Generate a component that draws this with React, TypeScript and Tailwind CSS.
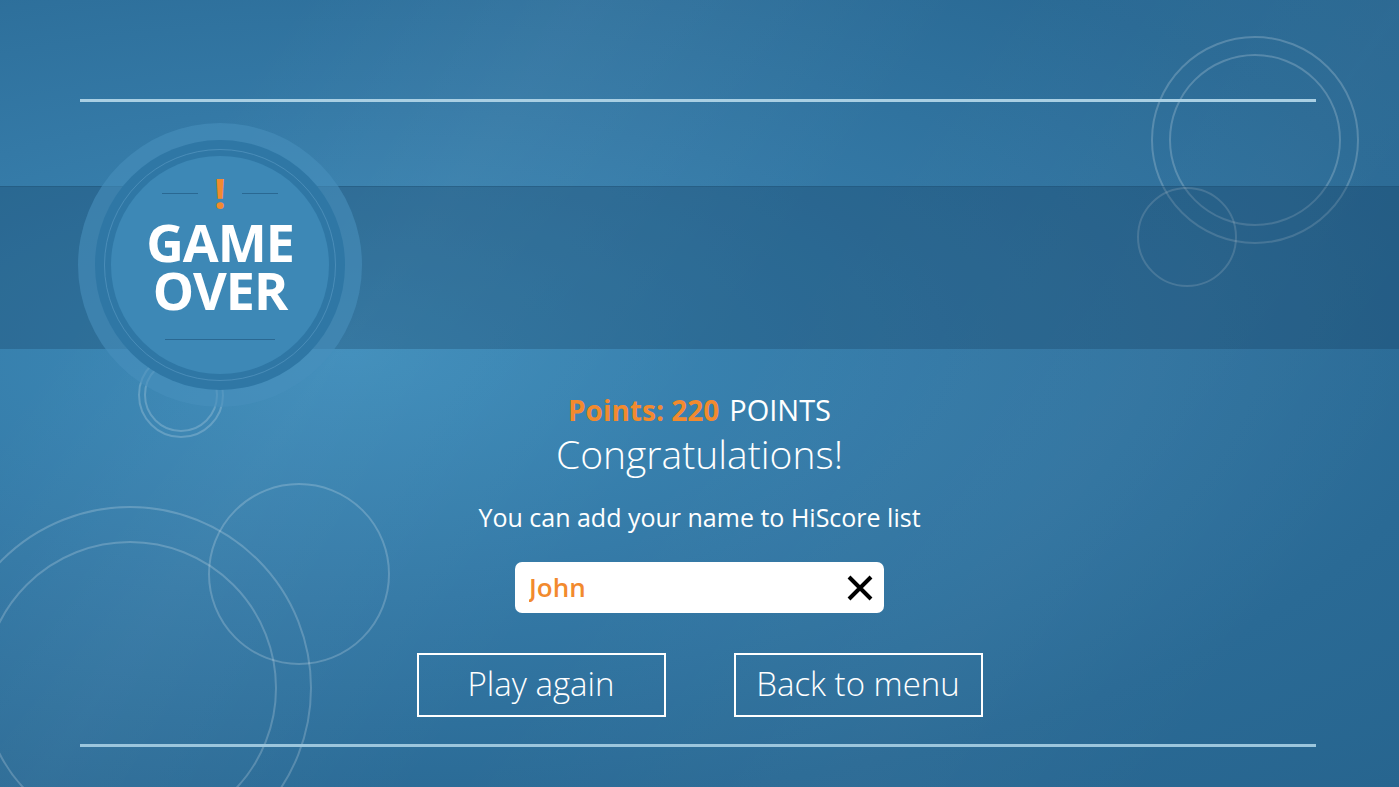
import { useState } from "react";

const font = { fontFamily: '"Open Sans", "Noto Sans", sans-serif' };

function Ring({ className }: { className: string }) {
  return <div className={`absolute rounded-full border-2 border-white/20 ${className}`} />;
}

function GameOverBadge() {
  return (
    <div className="absolute left-[78px] top-[123px] w-[284px] h-[284px] rounded-full bg-[#4790bd]/60 flex items-center justify-center">
      <div className="w-[250px] h-[250px] rounded-full bg-[#2f77a5] flex items-center justify-center">
        <div className="w-[232px] h-[232px] rounded-full border border-[#5c9bc4]/60 flex items-center justify-center">
          <div className="w-[218px] h-[218px] rounded-full bg-[#3d88b6] flex flex-col items-center">
            {/* exclamation with side rules */}
            <div className="mt-[20px] flex items-center gap-[16px]">
              <div className="w-[36px] h-px bg-[#2a6892]" />
              <span className="text-[#f28a2e] font-bold text-[42px] leading-[34px]">!</span>
              <div className="w-[36px] h-px bg-[#2a6892]" />
            </div>
            <div className="mt-[8px] text-white font-bold text-[52px] leading-[48px] tracking-[-1px] text-center">
              GAME
              <br />
              OVER
            </div>
            <div className="mt-[25px] w-[110px] h-px bg-[#2a6892]" />
          </div>
        </div>
      </div>
    </div>
  );
}

export default function App() {
  const [name, setName] = useState("John");

  return (
    <div
      className="relative w-full h-[787px] overflow-hidden bg-[radial-gradient(ellipse_at_25%_45%,#3d8cba_0%,#3479a6_40%,#2a6a95_75%,#27658f_100%)]"
      style={font}
    >
      {/* soft diagonal sheen */}
      <div className="absolute inset-0 bg-[linear-gradient(125deg,transparent_15%,rgba(255,255,255,0.04)_30%,transparent_50%,rgba(255,255,255,0.025)_72%,transparent_88%)]" />

      {/* decorative rings */}
      <Ring className="left-[1151px] top-[36px] w-[208px] h-[208px]" />
      <Ring className="left-[1169px] top-[54px] w-[172px] h-[172px]" />
      <Ring className="left-[1137px] top-[187px] w-[100px] h-[100px]" />
      <Ring className="left-[-52px] top-[506px] w-[364px] h-[364px]" />
      <Ring className="left-[-17px] top-[541px] w-[294px] h-[294px]" />
      <Ring className="left-[208px] top-[483px] w-[182px] h-[182px]" />

      <div className="relative flex flex-col">
        <div className="mt-[99px] mx-[80px] w-[1236px] h-[3px] bg-[#a9cfe3]" />

        {/* dark band */}
        <div className="mt-[84px] h-[163px] bg-[#0a2f4f]/25 border-t border-[#1d4f74]/40" />

        <div className="flex flex-col items-center text-white">
          <div className="mt-[44px] text-[28px] leading-[34px]">
            <span className="text-[#f28a2e] font-bold">Points: 220</span>
            <span className="ml-[10px] text-[29px]">POINTS</span>
          </div>
          <div className="mt-[4px] text-[39px] leading-[46px] font-light">Congratulations!</div>
          <div className="mt-[24px] text-[25px] leading-[32px]">You can add your name to HiScore list</div>

          <div className="mt-[29px] w-[369px] h-[51px] bg-white rounded-[7px] flex items-center pl-[14px] pr-[10px]">
            <input
              value={name}
              onChange={(e) => setName(e.target.value)}
              className="flex-1 min-w-0 bg-transparent outline-none text-[#f28a2e] font-semibold text-[26px]"
              style={font}
            />
            <button onClick={() => setName("")} className="w-[28px] h-[28px] flex items-center justify-center">
              <svg width="26" height="26" viewBox="0 0 26 26">
                <path d="M2 2 24 24M24 2 2 24" stroke="#000" strokeWidth="4" />
              </svg>
            </button>
          </div>

          <div className="mt-[40px] flex gap-[68px]">
            <button className="w-[249px] h-[64px] border-2 border-white text-[33px] font-light text-white pb-[2px]">
              Play again
            </button>
            <button className="w-[249px] h-[64px] border-2 border-white text-[33px] font-light text-white pb-[2px]">
              Back to menu
            </button>
          </div>
        </div>

        <div className="mt-[27px] mx-[80px] w-[1236px] h-[3px] bg-[#9cc6dd]" />
      </div>

      <Ring className="left-[138px] top-[352px] w-[86px] h-[86px]" />
      <Ring className="left-[144px] top-[358px] w-[74px] h-[74px]" />
      <GameOverBadge />
    </div>
  );
}
